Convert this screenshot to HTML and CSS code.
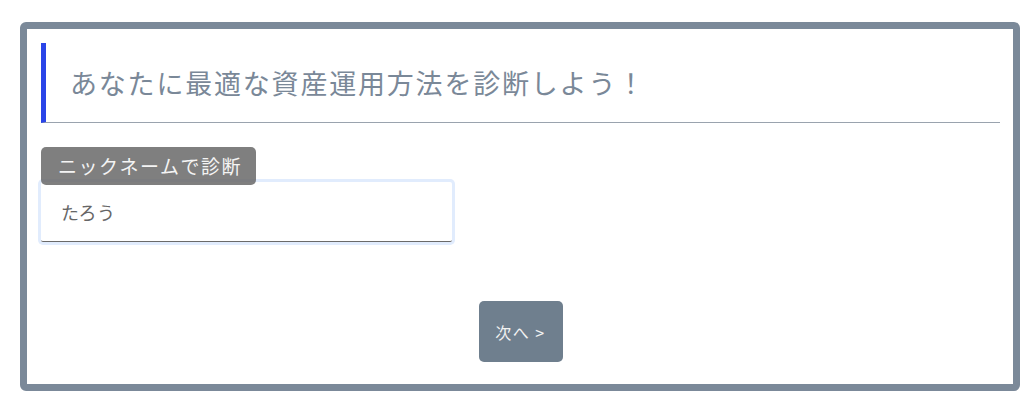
FILE: index.html
```html
<!DOCTYPE html>
<html lang="ja">
<head>
<meta charset="utf-8">
<link rel="stylesheet" href="styles.css">
</head>
<body>
<div class="page">
  <div class="card">
    <h1 class="title">あなたに最適な資産運用方法を診断しよう！</h1>
    <div class="field">
      <span class="label">ニックネームで診断</span>
      <div class="input">たろう</div>
    </div>
    <div class="actions">
      <button class="next">次へ &gt;</button>
    </div>
  </div>
</div>
</body>
</html>
```
FILE: styles.css
```css
html, body {
  margin: 0;
  padding: 0;
  background: #ffffff;
  font-family: "Noto Sans CJK JP", "Noto Sans", sans-serif;
}
.page {
  padding: 22px 0 0 20px;
}
.card {
  box-sizing: border-box;
  width: 1000px;
  height: 369px;
  border: 7px solid #7b8999;
  border-radius: 6px;
  padding: 14px 13px 0 14px;
  display: flex;
  flex-direction: column;
}
.title {
  margin: 0;
  height: 80px;
  box-sizing: border-box;
  border-left: 5px solid #2a45e8;
  border-bottom: 1px solid #9aa3ae;
  padding-left: 24px;
  display: flex;
  align-items: center;
  font-size: 27px;
  font-weight: normal;
  letter-spacing: 1.8px;
  color: #7a8898;
}
.field {
  margin-top: 24px;
  display: flex;
  flex-direction: column;
  align-items: flex-start;
}
.label {
  position: relative;
  z-index: 1;
  background: rgba(105, 105, 105, 0.85);
  color: #f4f4f4;
  font-size: 19px;
  letter-spacing: 1.5px;
  height: 38px;
  line-height: 38px;
  padding: 0 14px 0 17px;
  border-radius: 5px;
}
.input {
  margin-top: -3px;
  box-sizing: border-box;
  width: 411px;
  height: 60px;
  border-bottom: 1px solid #6a6a6a;
  box-shadow: 0 0 0 3px #e1ecfd;
  border-radius: 2px;
  padding-left: 20px;
  display: flex;
  align-items: center;
  font-size: 18px;
  letter-spacing: 0.5px;
  color: #666666;
}
.actions {
  margin-top: 59px;
  display: flex;
  justify-content: center;
}
.next {
  width: 84px;
  height: 61px;
  border: none;
  border-radius: 5px;
  background: #6f7f8e;
  color: #f2f2f2;
  font-family: "Noto Sans CJK JP", "Noto Sans", sans-serif;
  font-size: 16px;
  letter-spacing: 1.5px;
  padding: 0;
}
```
